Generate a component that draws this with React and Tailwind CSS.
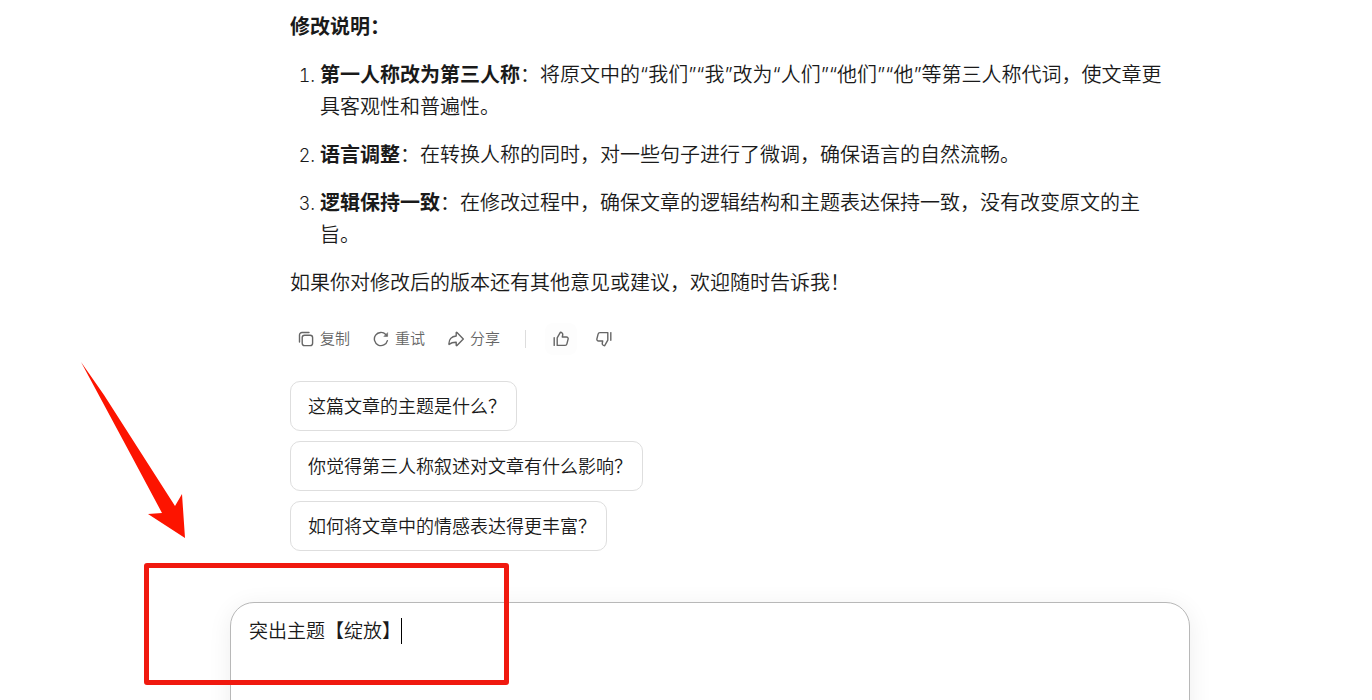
import React, { useState } from "react";

const notes = [
  {
    title: "第一人称改为第三人称",
    text: "：将原文中的“我们”“我”改为“人们”“他们”“他”等第三人称代词，使文章更具客观性和普遍性。",
  },
  {
    title: "语言调整",
    text: "：在转换人称的同时，对一些句子进行了微调，确保语言的自然流畅。",
  },
  {
    title: "逻辑保持一致",
    text: "：在修改过程中，确保文章的逻辑结构和主题表达保持一致，没有改变原文的主旨。",
  },
];

const suggestions = [
  "这篇文章的主题是什么？",
  "你觉得第三人称叙述对文章有什么影响？",
  "如何将文章中的情感表达得更丰富？",
];

const Icon = ({ children }) => (
  <svg
    className="size-4 shrink-0"
    viewBox="0 0 16 16"
    fill="none"
    stroke="currentColor"
    strokeWidth="1.4"
    strokeLinecap="round"
    strokeLinejoin="round"
    aria-hidden="true"
  >
    {children}
  </svg>
);

const CopyIcon = () => (
  <Icon>
    <rect x="4.2" y="4.2" width="10.4" height="10.4" rx="2.4" />
    <path d="M1.5 11V4a2.5 2.5 0 0 1 2.5-2.5H11" />
  </Icon>
);

const RetryIcon = () => (
  <Icon>
    <path d="M14.4 9.6A6.6 6.6 0 1 1 12.8 3.5" />
    <path d="M14.6 2v3.4h-3.4z" fill="currentColor" strokeWidth="0.6" />
  </Icon>
);

const ShareIcon = () => (
  <Icon>
    <path d="M8.2 1.7C8.2 1.3 8.7 1.2 9 1.5L15.3 8 9 14.5C8.7 14.8 8.2 14.7 8.2 14.3V11.2C5.2 11.1 3.2 11.7 1 13.4 .6 8.6 3.6 5.4 8.2 5Z" />
  </Icon>
);

const ThumbIcon = () => (
  <>
    <path d="M1.2 6.8v7.6" />
    <path d="M4.2 6.9 7.3 1.3C9 1.3 10 2.5 9.7 4L9.3 6h4.1c1.2 0 2 1 1.7 2.2l-1.2 4.7c-.2.9-.9 1.5-1.8 1.5H4.2Z" />
  </>
);

const App = () => {
  const [message, setMessage] = useState("突出主题【绽放】");

  return (
    <main className="h-screen overflow-hidden bg-white pl-12 font-['Inter','Noto_Sans_CJK_SC',sans-serif] font-[350] text-[#1a1a1a]">
      <div className="mx-auto max-w-[960px] pt-[11px]">
        <section className="pr-[25px] pl-[60px]">
          <div className="space-y-4 text-xl leading-8">
            <p className="font-bold">修改说明：</p>
            <ol className="list-decimal space-y-4 pl-[30px] marker:text-lg">
              {notes.map((note) => (
                <li key={note.title}>
                  <strong className="font-bold">{note.title}</strong>
                  {note.text}
                </li>
              ))}
            </ol>
            <p>如果你对修改后的版本还有其他意见或建议，欢迎随时告诉我！</p>
          </div>

          <div className="mt-6 flex h-8 items-center pl-2 text-[15px] text-[#666]">
            <button type="button" className="flex items-center gap-[6px]">
              <CopyIcon />
              复制
            </button>
            <button type="button" className="ml-[23px] flex items-center gap-[6px]">
              <RetryIcon />
              重试
            </button>
            <button type="button" className="ml-[23px] flex items-center gap-[6px]">
              <ShareIcon />
              分享
            </button>
            <div className="ml-[25px] h-[18px] w-px bg-[#ddd]" />
            <button
              type="button"
              aria-label="赞"
              className="ml-[19px] flex size-8 items-center justify-center rounded-lg bg-[#fdfdfd]"
            >
              <Icon>
                <ThumbIcon />
              </Icon>
            </button>
            <button
              type="button"
              aria-label="踩"
              className="ml-[11px] flex size-8 items-center justify-center rounded-lg"
            >
              <Icon>
                <g transform="rotate(180 8 8)">
                  <ThumbIcon />
                </g>
              </Icon>
            </button>
          </div>

          <div className="mt-[26px] flex flex-col items-start gap-[10px]">
            {suggestions.map((text) => (
              <button
                key={text}
                type="button"
                className="h-[50px] rounded-[10px] border border-[#dedede] pt-[2px] pr-[10px] pl-[17px] text-lg"
              >
                {text}
              </button>
            ))}
          </div>
        </section>

        <div className="relative mt-[51px]">
          <form className="flex h-[140px] items-start rounded-3xl border border-[#b8b8b8] bg-white px-[18px] pt-[15px] shadow-[0_4px_24px_rgba(0,0,0,0.07)]">
            <textarea
              rows={1}
              aria-label="输入消息"
              value={message}
              onChange={(event) => setMessage(event.target.value)}
              className="field-sizing-content resize-none overflow-hidden text-[19px] leading-7 outline-none"
            />
            <span className="h-[26px] w-px bg-black" />
          </form>

          {/* arrow and frame pointing at the prompt */}
          <svg
            className="pointer-events-none absolute -top-60 -left-[150px] h-[176px] w-[106px]"
            viewBox="0 0 106 176"
            fill="#fd1400"
            aria-hidden="true"
          >
            <path d="M1 0 24 33 95 144 102 132 105 176 68 152 82 151 51 93Z" />
          </svg>
          <div className="pointer-events-none absolute -top-[39px] -left-[86px] h-[122px] w-[365px] rounded-[3px] border-5 border-[#f0190f]" />
        </div>
      </div>
    </main>
  );
};

export default App;
